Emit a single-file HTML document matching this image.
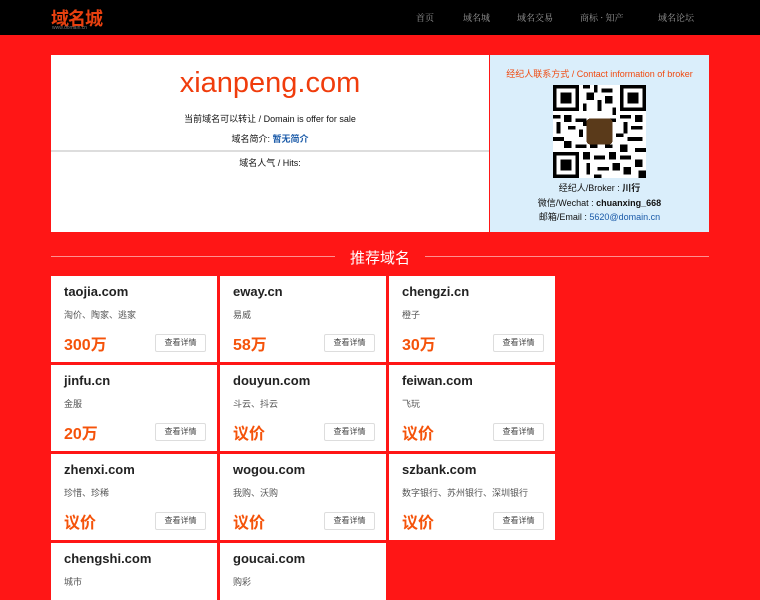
<!DOCTYPE html>
<html><head><meta charset="utf-8"><style>
*{margin:0;padding:0;box-sizing:border-box}
html,body{width:760px;height:600px;overflow:hidden}
body{background:#ff1616;font-family:"Liberation Sans","Noto Sans CJK SC",sans-serif;position:relative}
.hdr{position:absolute;left:0;top:0;width:760px;height:35px;background:#000}
.logo{position:absolute;left:51px;top:5px;color:#e8400f;font-size:18px;font-weight:bold;letter-spacing:-1px}
.logo small{position:absolute;left:1px;top:20px;font-size:5px;color:#777;font-weight:normal;letter-spacing:0;white-space:nowrap}
.nav{position:absolute;top:11px;font-size:9px;color:#999;font-family:"Noto Serif CJK SC",serif}
.main{position:absolute;left:51px;top:55px;width:438px;height:177px;background:#fff}
.dom{position:absolute;top:12px;width:100%;text-align:center;font-size:29px;color:#f03c0c}
.l{position:absolute;width:100%;text-align:center;font-size:9px;color:#111}
.hr{position:absolute;left:0;top:95px;width:100%;height:2px;background:#ddd}
.side{position:absolute;left:490px;top:55px;width:219px;height:177px;background:#daeefb}
.side .t{position:absolute;left:0;width:100%;text-align:center;font-size:9px;color:#111}
.title{position:absolute;top:247px;left:0;width:760px;text-align:center;color:#fff;font-size:15px}
.line{position:absolute;top:256px;height:1px;background:#ff9090}
.card{position:absolute;width:166px;height:86px;background:#fff}
.card b{position:absolute;left:13px;top:8px;font-size:13px;color:#222}
.card i{position:absolute;left:13px;top:32px;font-size:9px;color:#555;font-style:normal}
.card em{position:absolute;left:13px;top:55px;font-size:16px;color:#f5530a;font-weight:bold;font-style:normal}
.card u{position:absolute;left:104px;top:58px;width:51px;height:18px;border:1px solid #ddd;border-radius:2px;text-decoration:none;font-size:8px;color:#444;text-align:center;line-height:16px}
</style></head><body>
<div class="hdr">
<div class="logo">域名城<small>www.domain.cn</small></div>
<div class="nav" style="left:416px">首页</div>
<div class="nav" style="left:463px">域名城</div>
<div class="nav" style="left:517px">域名交易</div>
<div class="nav" style="left:580px">商标 · 知产</div>
<div class="nav" style="left:658px">域名论坛</div>
</div>
<div class="main">
<div class="dom">xianpeng.com</div>
<div class="l" style="top:57px">当前域名可以转让 / Domain is offer for sale</div>
<div class="l" style="top:77px">域名简介: <span style="color:#1a5aa8;font-weight:bold">暂无简介</span></div>
<div class="hr"></div>
<div class="l" style="top:101px">域名人气 / Hits:</div>
</div>
<div class="side">
<div class="t" style="top:12px;color:#f04a10">经纪人联系方式 / Contact information of broker</div>
<svg style="position:absolute;left:63px;top:30px" width="93" height="93" viewBox="0 0 25 25" shape-rendering="crispEdges">
<rect width="25" height="25" fill="#fff"/>
<g fill="#000">
<path d="M0 0h7v7h-7zM1 1v5h5v-5zM2 2h3v3h-3z" fill-rule="evenodd"/>
<path d="M18 0h7v7h-7zM19 1v5h5v-5zM20 2h3v3h-3z" fill-rule="evenodd"/>
<path d="M0 18h7v7h-7zM1 19v5h5v-5zM2 20h3v3h-3z" fill-rule="evenodd"/>
<path d="M8 0h2v1h-2zM11 0h1v2h-1zM13 1h3v1h-3zM9 2h2v2h-2zM14 3h2v2h-2zM8 5h1v2h-1zM12 4h1v3h-1zM16 6h1v2h-1zM0 8h2v1h-2zM3 8h2v2h-2zM6 9h3v1h-3zM1 10h1v3h-1zM4 11h2v1h-2zM7 12h1v2h-1zM0 14h3v1h-3zM3 15h2v2h-2zM6 16h3v1h-3zM18 8h3v1h-3zM22 8h2v2h-2zM19 10h1v3h-1zM21 11h3v1h-3zM17 13h2v1h-2zM20 14h4v1h-4zM18 16h2v2h-2zM22 17h3v1h-3zM8 18h2v2h-2zM11 19h3v1h-3zM15 18h2v2h-2zM18 19h3v1h-3zM9 21h1v3h-1zM12 22h3v1h-3zM16 21h2v2h-2zM19 22h2v2h-2zM22 20h2v2h-2zM23 23h2v2h-2zM11 24h2v1h-2zM8 10h1v1h-1zM15 9h2v1h-2zM10 16h2v1h-2zM14 16h2v1h-2z"/>
<rect x="9" y="9" width="7" height="7" rx="1" fill="#5a3a1a"/>
</g></svg>
<div class="t" style="top:126px">经纪人/Broker : <b>川行</b></div>
<div class="t" style="top:141px">微信/Wechat : <b>chuanxing_668</b></div>
<div class="t" style="top:155px">邮箱/Email : <span style="color:#1a5aa8">5620@domain.cn</span></div>
</div>
<div class="line" style="left:51px;width:284px"></div>
<div class="line" style="left:425px;width:284px"></div>
<div class="title">推荐域名</div>

<div class="card" style="left:51px;top:276px"><b>taojia.com</b><i>淘价、陶家、逃家</i><em>300万</em><u>查看详情</u></div>
<div class="card" style="left:220px;top:276px"><b>eway.cn</b><i>易威</i><em>58万</em><u>查看详情</u></div>
<div class="card" style="left:389px;top:276px"><b>chengzi.cn</b><i>橙子</i><em>30万</em><u>查看详情</u></div>
<div class="card" style="left:51px;top:365px"><b>jinfu.cn</b><i>金服</i><em>20万</em><u>查看详情</u></div>
<div class="card" style="left:220px;top:365px"><b>douyun.com</b><i>斗云、抖云</i><em>议价</em><u>查看详情</u></div>
<div class="card" style="left:389px;top:365px"><b>feiwan.com</b><i>飞玩</i><em>议价</em><u>查看详情</u></div>
<div class="card" style="left:51px;top:454px"><b>zhenxi.com</b><i>珍惜、珍稀</i><em>议价</em><u>查看详情</u></div>
<div class="card" style="left:220px;top:454px"><b>wogou.com</b><i>我购、沃购</i><em>议价</em><u>查看详情</u></div>
<div class="card" style="left:389px;top:454px"><b>szbank.com</b><i>数字银行、苏州银行、深圳银行</i><em>议价</em><u>查看详情</u></div>
<div class="card" style="left:51px;top:543px"><b>chengshi.com</b><i>城市</i></div>
<div class="card" style="left:220px;top:543px"><b>goucai.com</b><i>购彩</i></div>
</body></html>
